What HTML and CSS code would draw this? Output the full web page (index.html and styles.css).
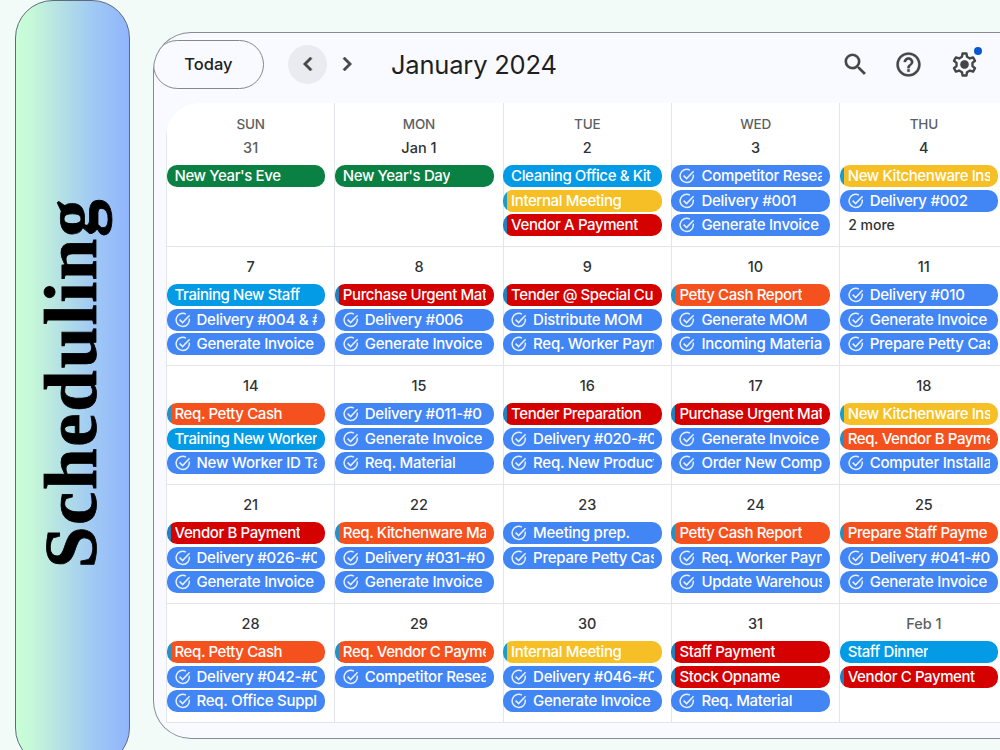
FILE: index.html
```html
<!DOCTYPE html>
<html lang="en">
<head>
    <meta charset="UTF-8">
    <meta name="viewport" content="width=device-width, initial-scale=1.0">
    <title>Scheduling - January 2024</title>
    <link rel="stylesheet" href="styles.css">
</head>
<body>
    <svg class="sprite">
        <symbol id="check" viewBox="0 0 16 16">
            <path d="M14.2 6.6A6.6 6.6 0 1 1 10.9 2.1"/>
            <path d="M4.6 7.6l3 3L14.6 3.2"/>
        </symbol>
    </svg>

    <aside class="side-title">
        <h1>Scheduling</h1>
    </aside>

    <main class="panel">
        <header class="toolbar">
            <button class="today">Today</button>
            <button class="arrow active">
                <svg viewBox="0 0 24 24"><path d="M15.4 7.4L14 6l-6 6 6 6 1.4-1.4L10.8 12z"/></svg>
            </button>
            <button class="arrow">
                <svg viewBox="0 0 24 24"><path d="M8.6 7.4L10 6l6 6-6 6-1.4-1.4L13.2 12z"/></svg>
            </button>
            <h2>January 2024</h2>
            <div class="tools">
                <svg viewBox="0 0 24 24"><path d="M15.5 14h-.79l-.28-.27A6.47 6.47 0 0 0 16 9.5 6.5 6.5 0 1 0 9.5 16c1.61 0 3.09-.59 4.23-1.57l.27.28v.79l5 4.99L20.49 19l-4.99-5zm-6 0C7.01 14 5 11.99 5 9.5S7.01 5 9.5 5 14 7.01 14 9.5 11.99 14 9.5 14z"/></svg>
                <svg viewBox="0 0 24 24"><path d="M11 18h2v-2h-2v2zm1-16C6.48 2 2 6.48 2 12s4.48 10 10 10 10-4.48 10-10S17.52 2 12 2zm0 18c-4.41 0-8-3.59-8-8s3.59-8 8-8 8 3.59 8 8-3.59 8-8 8zm0-14c-2.21 0-4 1.79-4 4h2c0-1.1.9-2 2-2s2 .9 2 2c0 2-3 1.75-3 5h2c0-2.25 3-2.5 3-5 0-2.21-1.79-4-4-4z"/></svg>
                <div class="settings">
                    <svg viewBox="0 0 24 24">
                        <path class="gear" d="M9.9 5.6L10.4 2.9H13.6L14.1 5.6L16.5 7L19.1 6.1L20.7 8.9L18.6 10.7V13.3L20.7 15.1L19.1 17.9L16.5 17L14.1 18.4L13.6 21.1H10.4L9.9 18.4L7.5 17L4.9 17.9L3.3 15.1L5.4 13.3V10.7L3.3 8.9L4.9 6.1L7.5 7Z"/>
                        <circle cx="12" cy="12" r="3.5"/>
                    </svg>
                    <span class="dot"></span>
                </div>
            </div>
        </header>

        <section class="calendar">
            <div class="day">
                <span class="weekday">SUN</span>
                <span class="date muted">31</span>
                <div class="event green"><span>New Year's Eve</span></div>
            </div>
            <div class="day">
                <span class="weekday">MON</span>
                <span class="date">Jan 1</span>
                <div class="event green"><span>New Year's Day</span></div>
            </div>
            <div class="day">
                <span class="weekday">TUE</span>
                <span class="date">2</span>
                <div class="event sky"><span>Cleaning Office &amp; Kit</span></div>
                <div class="event yellow"><span>Internal Meeting</span></div>
                <div class="event red"><span>Vendor A Payment</span></div>
            </div>
            <div class="day">
                <span class="weekday">WED</span>
                <span class="date">3</span>
                <div class="event task"><svg><use href="#check"/></svg><span>Competitor Resea</span></div>
                <div class="event task"><svg><use href="#check"/></svg><span>Delivery #001</span></div>
                <div class="event task"><svg><use href="#check"/></svg><span>Generate Invoice</span></div>
            </div>
            <div class="day">
                <span class="weekday">THU</span>
                <span class="date">4</span>
                <div class="event yellow"><span>New Kitchenware Ins</span></div>
                <div class="event task"><svg><use href="#check"/></svg><span>Delivery #002</span></div>
                <div class="more">2 more</div>
            </div>

            <div class="day">
                <span class="date">7</span>
                <div class="event sky"><span>Training New Staff</span></div>
                <div class="event task"><svg><use href="#check"/></svg><span>Delivery #004 &amp; #</span></div>
                <div class="event task"><svg><use href="#check"/></svg><span>Generate Invoice</span></div>
            </div>
            <div class="day">
                <span class="date">8</span>
                <div class="event red"><span>Purchase Urgent Mat</span></div>
                <div class="event task"><svg><use href="#check"/></svg><span>Delivery #006</span></div>
                <div class="event task"><svg><use href="#check"/></svg><span>Generate Invoice</span></div>
            </div>
            <div class="day">
                <span class="date">9</span>
                <div class="event red"><span>Tender @ Special Cu</span></div>
                <div class="event task"><svg><use href="#check"/></svg><span>Distribute MOM</span></div>
                <div class="event task"><svg><use href="#check"/></svg><span>Req. Worker Paym</span></div>
            </div>
            <div class="day">
                <span class="date">10</span>
                <div class="event orange"><span>Petty Cash Report</span></div>
                <div class="event task"><svg><use href="#check"/></svg><span>Generate MOM</span></div>
                <div class="event task"><svg><use href="#check"/></svg><span>Incoming Materia</span></div>
            </div>
            <div class="day">
                <span class="date">11</span>
                <div class="event task"><svg><use href="#check"/></svg><span>Delivery #010</span></div>
                <div class="event task"><svg><use href="#check"/></svg><span>Generate Invoice</span></div>
                <div class="event task"><svg><use href="#check"/></svg><span>Prepare Petty Cas</span></div>
            </div>

            <div class="day">
                <span class="date">14</span>
                <div class="event orange"><span>Req. Petty Cash</span></div>
                <div class="event sky"><span>Training New Worker</span></div>
                <div class="event task"><svg><use href="#check"/></svg><span>New Worker ID Ta</span></div>
            </div>
            <div class="day">
                <span class="date">15</span>
                <div class="event task"><svg><use href="#check"/></svg><span>Delivery #011-#0</span></div>
                <div class="event task"><svg><use href="#check"/></svg><span>Generate Invoice</span></div>
                <div class="event task"><svg><use href="#check"/></svg><span>Req. Material</span></div>
            </div>
            <div class="day">
                <span class="date">16</span>
                <div class="event red"><span>Tender Preparation</span></div>
                <div class="event task"><svg><use href="#check"/></svg><span>Delivery #020-#0</span></div>
                <div class="event task"><svg><use href="#check"/></svg><span>Req. New Product</span></div>
            </div>
            <div class="day">
                <span class="date">17</span>
                <div class="event red"><span>Purchase Urgent Mat</span></div>
                <div class="event task"><svg><use href="#check"/></svg><span>Generate Invoice</span></div>
                <div class="event task"><svg><use href="#check"/></svg><span>Order New Comp</span></div>
            </div>
            <div class="day">
                <span class="date">18</span>
                <div class="event yellow"><span>New Kitchenware Ins</span></div>
                <div class="event orange"><span>Req. Vendor B Payme</span></div>
                <div class="event task"><svg><use href="#check"/></svg><span>Computer Installa</span></div>
            </div>

            <div class="day">
                <span class="date">21</span>
                <div class="event red"><span>Vendor B Payment</span></div>
                <div class="event task"><svg><use href="#check"/></svg><span>Delivery #026-#0</span></div>
                <div class="event task"><svg><use href="#check"/></svg><span>Generate Invoice</span></div>
            </div>
            <div class="day">
                <span class="date">22</span>
                <div class="event orange"><span>Req. Kitchenware Ma</span></div>
                <div class="event task"><svg><use href="#check"/></svg><span>Delivery #031-#0</span></div>
                <div class="event task"><svg><use href="#check"/></svg><span>Generate Invoice</span></div>
            </div>
            <div class="day">
                <span class="date">23</span>
                <div class="event task"><svg><use href="#check"/></svg><span>Meeting prep.</span></div>
                <div class="event task"><svg><use href="#check"/></svg><span>Prepare Petty Cas</span></div>
            </div>
            <div class="day">
                <span class="date">24</span>
                <div class="event orange"><span>Petty Cash Report</span></div>
                <div class="event task"><svg><use href="#check"/></svg><span>Req. Worker Paym</span></div>
                <div class="event task"><svg><use href="#check"/></svg><span>Update Warehous</span></div>
            </div>
            <div class="day">
                <span class="date">25</span>
                <div class="event orange"><span>Prepare Staff Payme</span></div>
                <div class="event task"><svg><use href="#check"/></svg><span>Delivery #041-#0</span></div>
                <div class="event task"><svg><use href="#check"/></svg><span>Generate Invoice</span></div>
            </div>

            <div class="day">
                <span class="date">28</span>
                <div class="event orange"><span>Req. Petty Cash</span></div>
                <div class="event task"><svg><use href="#check"/></svg><span>Delivery #042-#0</span></div>
                <div class="event task"><svg><use href="#check"/></svg><span>Req. Office Suppl</span></div>
            </div>
            <div class="day">
                <span class="date">29</span>
                <div class="event orange"><span>Req. Vendor C Payme</span></div>
                <div class="event task"><svg><use href="#check"/></svg><span>Competitor Resea</span></div>
            </div>
            <div class="day">
                <span class="date">30</span>
                <div class="event yellow"><span>Internal Meeting</span></div>
                <div class="event task"><svg><use href="#check"/></svg><span>Delivery #046-#0</span></div>
                <div class="event task"><svg><use href="#check"/></svg><span>Generate Invoice</span></div>
            </div>
            <div class="day">
                <span class="date">31</span>
                <div class="event red"><span>Staff Payment</span></div>
                <div class="event red"><span>Stock Opname</span></div>
                <div class="event task"><svg><use href="#check"/></svg><span>Req. Material</span></div>
            </div>
            <div class="day">
                <span class="date muted">Feb 1</span>
                <div class="event sky"><span>Staff Dinner</span></div>
                <div class="event red"><span>Vendor C Payment</span></div>
            </div>
        </section>
    </main>
</body>
</html>
```

FILE: styles.css
```css
* {
    margin: 0;
    padding: 0;
    box-sizing: border-box;
}

body {
    font-family: Inter, 'Open Sans', sans-serif;
    background: #f3fbf9;
    height: 750px;
    padding-left: 15px;
    display: flex;
    align-items: flex-start;
    gap: 23px;
    overflow: hidden;
}

.sprite {
    display: none;
}

.side-title {
    flex: none;
    width: 115px;
    height: 766px;
    border: 1px solid #5d6c7c;
    border-radius: 38px;
    background: linear-gradient(to right, #c9fed6 0%, #c6f8d9 14%, #b3dfe5 42%, #a0c9f4 68%, #91b5fd 100%);
    display: flex;
    align-items: center;
    justify-content: center;
}

.side-title h1 {
    margin-right: 3px;
    font-family: 'Liberation Serif', serif;
    font-size: 75px;
    font-weight: 700;
    line-height: 86px;
    letter-spacing: 1.6px;
    color: #000;
    -webkit-text-stroke: 0.8px #000;
    writing-mode: vertical-rl;
    transform: rotate(180deg);
}

/* runs off the right edge of the page */
.panel {
    flex: 1;
    min-width: 0;
    height: 707px;
    margin-top: 32px;
    border: 1px solid #858b90;
    border-right: none;
    border-radius: 38px 0 0 38px;
    background: #f8faff;
    overflow: hidden;
}

.toolbar {
    height: 70px;
    display: flex;
    align-items: center;
    padding-bottom: 8px;
}

.today {
    flex: none;
    width: 111px;
    height: 49px;
    margin-left: -1px;
    border: 1px solid #85888c;
    border-radius: 25px;
    background: none;
    font-family: inherit;
    font-size: 16.5px;
    font-weight: 500;
    color: #202124;
}

.arrow {
    flex: none;
    width: 39px;
    height: 39px;
    border: none;
    border-radius: 50%;
    background: none;
}

.arrow.active {
    background: #e9ebf0;
    margin-left: 24px;
}

.arrow svg {
    display: block;
    width: 28px;
    height: 28px;
    margin: 0 auto;
    fill: #444746;
    stroke: #444746;
    stroke-width: 0.5;
}

.toolbar h2 {
    margin-left: 25px;
    font-size: 25.5px;
    font-weight: 400;
    letter-spacing: -0.2px;
    white-space: nowrap;
    color: #1f1f1f;
}

.tools {
    display: flex;
    align-items: center;
    margin-left: auto;
    padding-right: 21px;
    gap: 24px;
}

.tools svg {
    display: block;
    flex: none;
    width: 29px;
    height: 29px;
    fill: #444746;
    stroke: #444746;
    stroke-width: 0.2;
}

.settings {
    position: relative;
    margin-left: 3px;
}

.settings svg .gear {
    fill: none;
    stroke-width: 2;
    stroke-linejoin: round;
}

.dot {
    position: absolute;
    top: -3px;
    left: 24px;
    width: 8px;
    height: 8px;
    border-radius: 50%;
    background: #0b57d0;
}

.calendar {
    display: grid;
    grid-template-columns: repeat(5, 168.3px);
    grid-template-rows: 144px repeat(4, 119px);
    margin-left: 12px;
    background: #fff;
    border-top-left-radius: 34px;
    overflow: hidden;
}

.day {
    border-left: 1px solid #e2e6ea;
    border-bottom: 1px solid #e2e6ea;
    padding-right: 9px;
    display: flex;
    flex-direction: column;
    justify-content: flex-start;
    gap: 2.6px;
    min-width: 0;
}

.weekday {
    height: 18px;
    margin: 12px -9px -1px 0;
    font-size: 13.5px;
    line-height: 18px;
    font-weight: 500;
    letter-spacing: -0.2px;
    text-align: center;
    color: #5c5f61;
}

.date {
    height: 20px;
    margin: 10px -9px 4.5px 0;
    font-size: 14.5px;
    line-height: 20px;
    font-weight: 500;
    text-align: center;
    color: #303234;
}

.weekday + .date {
    margin-top: 3px;
    margin-bottom: 5px;
}

.date.muted {
    color: #5c5f61;
}

.event {
    flex: none;
    display: flex;
    align-items: center;
    height: 22px;
    margin-left: -0.5px;
    padding: 0 8px;
    border-radius: 10px;
    font-size: 15px;
    line-height: 22px;
    font-weight: 500;
    letter-spacing: -0.4px;
    white-space: nowrap;
    color: #fff;
}

.event span {
    overflow: hidden;
}

.event svg {
    flex: none;
    width: 16px;
    height: 16px;
    margin-right: 6px;
    fill: none;
    stroke: #e6f0ff;
    stroke-width: 1.5;
}

.green {
    background: #0b8043;
}

.sky {
    background: #039be5;
}

.task {
    background: #4285f4;
    letter-spacing: -0.25px;
}

/* own colour with a thin blue strip on the left */
.yellow {
    background: linear-gradient(to right, #1a9dc9 4px, #f6bf26 4px);
}

.red {
    background: linear-gradient(to right, #2480bd 4px, #d50000 4px);
}

.orange {
    background: linear-gradient(to right, #2691c4 4px, #f4511e 4px);
}

.more {
    padding-left: 8px;
    font-size: 14px;
    line-height: 21px;
    font-weight: 500;
    color: #303234;
}
```
